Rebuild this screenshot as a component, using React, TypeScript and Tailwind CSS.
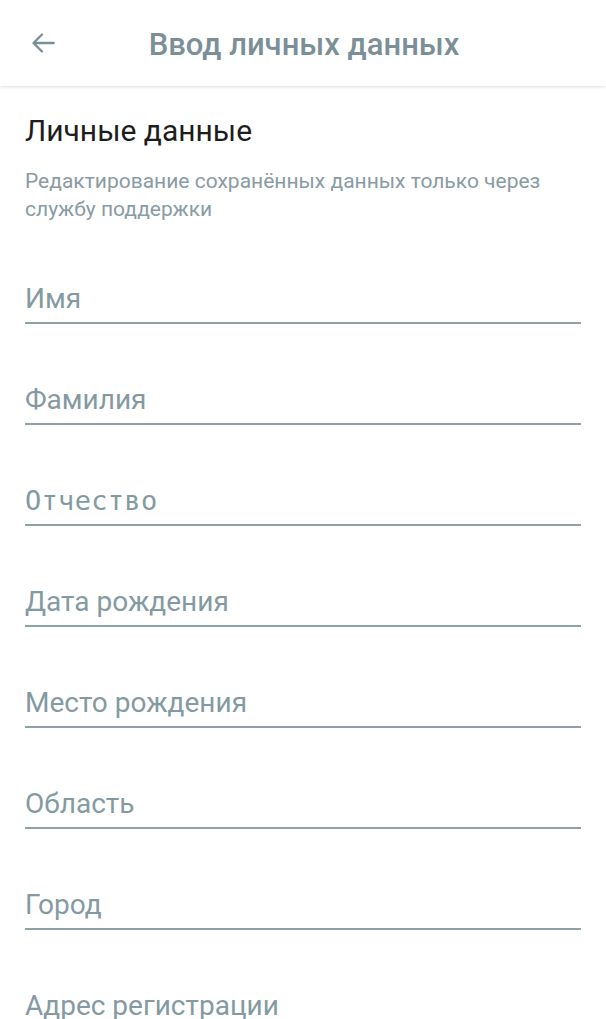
import React from "react";

const fields = [
  "Имя",
  "Фамилия",
  "Отчество",
  "Дата рождения",
  "Место рождения",
  "Область",
  "Город",
  "Адрес регистрации",
];

export default function App() {
  return (
    <div
      className="w-[606px] h-[1019px] overflow-hidden bg-white"
      style={{ fontFamily: "Roboto, 'Noto Sans', sans-serif" }}
    >
      <header className="relative h-[86px] flex items-center justify-center bg-white shadow-[0_1px_3px_rgba(0,0,0,0.12)] z-10">
        <button className="absolute left-[27px] top-[27px] w-[32px] h-[32px] flex items-center justify-center text-[#7b8f98]">
          <svg width="30" height="30" viewBox="0 0 24 24" fill="none">
            <path
              d="M20.5 12H4.5M11.2 5.2L4.4 12L11.2 18.8"
              stroke="currentColor"
              strokeWidth="1.9"
              strokeLinecap="round"
              strokeLinejoin="round"
            />
          </svg>
        </button>
        <h1 className="text-[31px] font-medium text-[#7b8f98] leading-none pl-[2px] pt-[2px]">
          Ввод личных данных
        </h1>
      </header>
      <main className="px-[25px]">
        <h2 className="mt-[27px] text-[30px] leading-[36px] text-[#1d1d1d]">
          Личные данные
        </h2>
        <p className="mt-[18px] text-[21px] leading-[28px] text-[#8a9ba3]">
          Редактирование сохранённых данных только через службу поддержки
        </p>
        <div className="flex flex-col">
          {fields.map((f) => (
            <div
              key={f}
              className="h-[101px] flex items-end border-b-2 border-[#8fa0a6] w-[556px]"
            >
              <span
                className="text-[28px] leading-[32px] pb-[7px] text-[#849aa2]"
                style={
                  f === "Отчество"
                    ? { fontFamily: "'DejaVu Sans Mono', monospace", fontSize: "27px", letterSpacing: "0.3px" }
                    : undefined
                }
              >
                {f}
              </span>
            </div>
          ))}
        </div>
      </main>
    </div>
  );
}
